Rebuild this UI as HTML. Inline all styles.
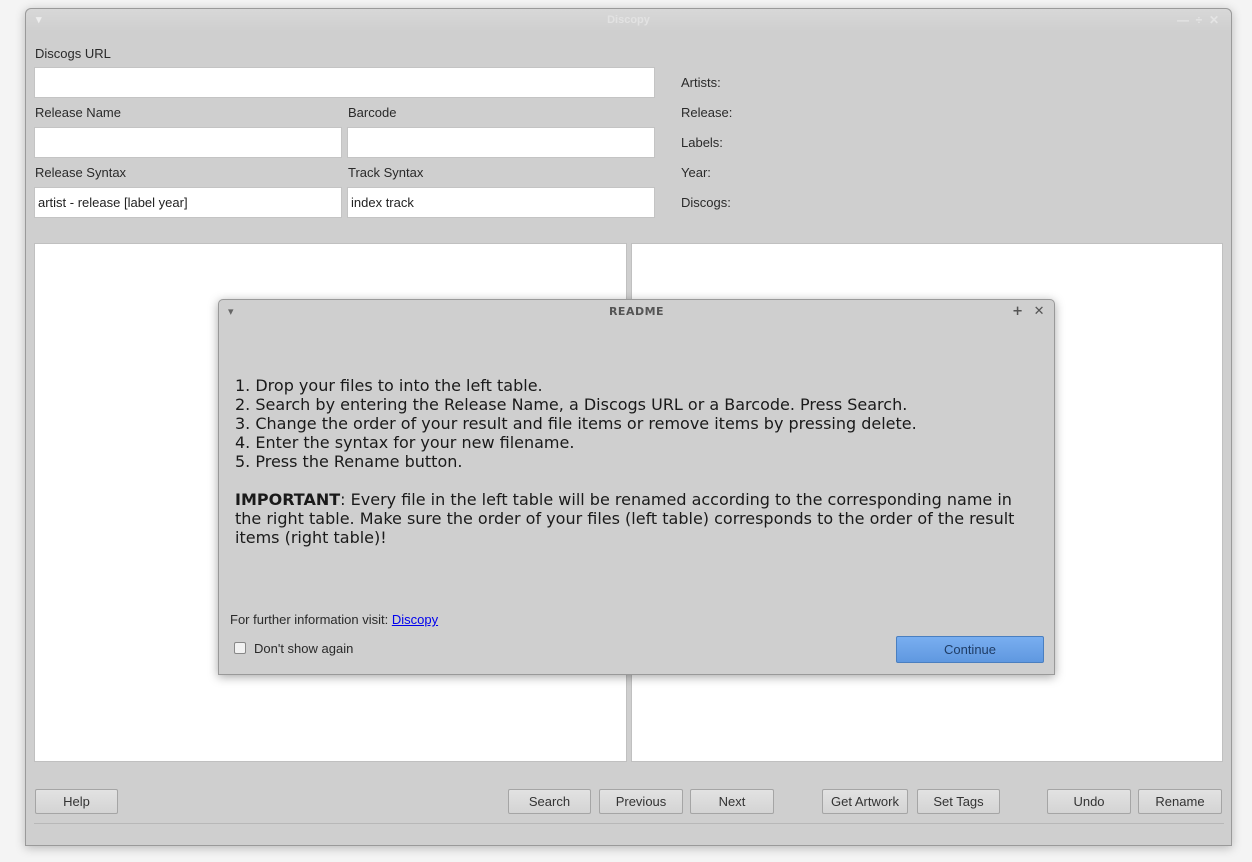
<!DOCTYPE html>
<html><head><meta charset="utf-8"><style>
*{box-sizing:border-box;margin:0;padding:0}
body{width:1252px;height:862px;background:#f4f4f4;position:relative;overflow:hidden;font-family:"Liberation Sans",sans-serif;font-size:13px;color:#2a2a2a}
.win{position:absolute;left:25px;top:8px;width:1207px;height:838px;background:#cfcfcf;border:1px solid #9a9a9a;border-radius:6px 6px 0 0;box-shadow:0 2px 10px rgba(0,0,0,.25)}
.title{position:absolute;left:0;top:0;width:100%;height:22px;background:linear-gradient(#d8d8d8,#cfcfcf);border-radius:6px 6px 0 0;text-align:center;color:#e2e2e2;font-weight:bold;font-size:11px;line-height:22px}
.a{position:absolute}
.lbl{position:absolute;font-size:13px}
.inp{position:absolute;background:#fff;border:1px solid #c4c4c4;height:31px;padding-left:3px;line-height:29px;font-size:13px;color:#222}
.tbl{position:absolute;background:#fff;border:1px solid #c0c0c0}
.btn{position:absolute;height:25px;border:1px solid #a5a5a5;border-radius:2px;background:linear-gradient(#e2e2e2,#d4d4d4);text-align:center;line-height:23px;font-size:13px;color:#333}
.dlg{position:absolute;left:218px;top:299px;width:837px;height:376px;background:#cfcfcf;border:1px solid #999;border-radius:5px 5px 0 0;box-shadow:0 2px 10px rgba(0,0,0,.35)}
.dt{position:absolute;left:0;top:0;width:100%;height:24px;text-align:center;line-height:24px;font-weight:bold;font-size:11px;color:#555;letter-spacing:.5px;font-family:"DejaVu Sans",sans-serif}
.body{position:absolute;left:16px;top:76px;font-family:"DejaVu Sans",sans-serif;font-size:16px;line-height:19px;color:#1a1a1a;width:790px}
</style></head><body>
<div class="win">
 <div class="title">Discopy<span class="a" style="left:10px;top:0;color:#eee">▾</span><span class="a" style="right:12px;top:0;color:#e4e4e4;font-size:12px">—&nbsp; ÷&nbsp; ✕</span></div>
 <div class="lbl" style="left:9px;top:37px">Discogs URL</div>
 <div class="inp" style="left:8px;top:58px;width:621px"></div>
 <div class="lbl" style="left:9px;top:96px">Release Name</div>
 <div class="lbl" style="left:322px;top:96px">Barcode</div>
 <div class="inp" style="left:8px;top:118px;width:308px"></div>
 <div class="inp" style="left:321px;top:118px;width:308px"></div>
 <div class="lbl" style="left:9px;top:156px">Release Syntax</div>
 <div class="lbl" style="left:322px;top:156px">Track Syntax</div>
 <div class="inp" style="left:8px;top:178px;width:308px">artist - release [label year]</div>
 <div class="inp" style="left:321px;top:178px;width:308px">index track</div>
 <div class="lbl" style="left:655px;top:66px">Artists:</div>
 <div class="lbl" style="left:655px;top:96px">Release:</div>
 <div class="lbl" style="left:655px;top:126px">Labels:</div>
 <div class="lbl" style="left:655px;top:156px">Year:</div>
 <div class="lbl" style="left:655px;top:186px">Discogs:</div>
 <div class="tbl" style="left:8px;top:234px;width:593px;height:519px"></div>
 <div class="tbl" style="left:605px;top:234px;width:592px;height:519px"></div>
 <div class="btn" style="left:9px;top:780px;width:83px">Help</div>
 <div class="btn" style="left:482px;top:780px;width:83px">Search</div>
 <div class="btn" style="left:573px;top:780px;width:84px">Previous</div>
 <div class="btn" style="left:664px;top:780px;width:84px">Next</div>
 <div class="btn" style="left:796px;top:780px;width:86px">Get Artwork</div>
 <div class="btn" style="left:891px;top:780px;width:83px">Set Tags</div>
 <div class="btn" style="left:1021px;top:780px;width:84px">Undo</div>
 <div class="btn" style="left:1112px;top:780px;width:84px">Rename</div>
 <div class="a" style="left:8px;top:814px;width:1190px;height:1px;background:#b8b8b8"></div>
</div>
<div class="dlg">
 <div class="dt">README<span class="a" style="left:9px;top:0;color:#666">▾</span><span class="a" style="right:9px;top:0;color:#555;font-size:13px">+&nbsp;&nbsp;✕</span></div>
 <div class="body">1. Drop your files to into the left table.<br>2. Search by entering the Release Name, a Discogs URL or a Barcode. Press Search.<br>3. Change the order of your result and file items or remove items by pressing delete.<br>4. Enter the syntax for your new filename.<br>5. Press the Rename button.<br><br><b>IMPORTANT</b>: Every file in the left table will be renamed according to the corresponding name in<br>the right table. Make sure the order of your files (left table) corresponds to the order of the result<br>items (right table)!</div>
 <div class="a" style="left:11px;top:312px;font-size:13px">For further information visit: <span style="color:#0000ee;text-decoration:underline">Discopy</span></div>
 <div class="a" style="left:15px;top:342px;width:12px;height:12px;border:1px solid #888;background:#f2f2f2;border-radius:2px"></div>
 <div class="a" style="left:35px;top:341px;font-size:13px">Don't show again</div>
 <div class="a" style="left:677px;top:336px;width:148px;height:27px;border:1px solid #4a7fc0;border-radius:2px;background:linear-gradient(#79aef0,#5f98e0);text-align:center;line-height:25px;color:#1f3d66;font-size:13px">Continue</div>
</div>
</body></html>
